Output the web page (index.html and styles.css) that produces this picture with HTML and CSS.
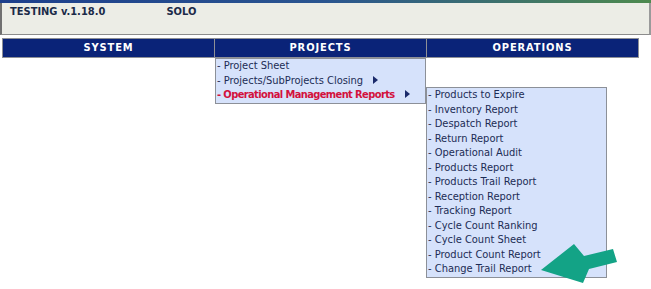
FILE: index.html
```html
<!DOCTYPE html>
<html lang="en">
<head>
<meta charset="UTF-8">
<title>Menu</title>
<link rel="stylesheet" href="styles.css">
</head>
<body>
<div class="topbar"></div>
<div class="header">
<span class="app-name">TESTING v.1.18.0</span>
<span class="app-user">SOLO</span>
</div>
<ul class="nav">
<li class="nav-item">SYSTEM</li>
<li class="nav-item">PROJECTS
<ul class="dropdown">
<li>- Project Sheet</li>
<li class="has-sub">- Projects/SubProjects Closing <span class="caret"></span></li>
<li class="has-sub active"><span class="label">- Operational Management Reports</span> <span class="caret"></span>
<ul class="submenu">
<li>- Products to Expire</li>
<li>- Inventory Report</li>
<li>- Despatch Report</li>
<li>- Return Report</li>
<li>- Operational Audit</li>
<li>- Products Report</li>
<li>- Products Trail Report</li>
<li>- Reception Report</li>
<li>- Tracking Report</li>
<li>- Cycle Count Ranking</li>
<li>- Cycle Count Sheet</li>
<li>- Product Count Report</li>
<li>- Change Trail Report</li>
</ul>
</li>
</ul>
</li>
<li class="nav-item">OPERATIONS</li>
</ul>
<svg class="pointer" width="90" height="50" viewBox="0 0 90 50">
<polygon points="1,27 34,1 44,13 73,6 77,19 49,26 43,40" fill="#13a386"/>
</svg>
</body>
</html>
```

FILE: styles.css
```css
body {
    margin: 0;
    background: #fff;
    font: 11px/14.5px "DejaVu Sans Condensed", Tahoma, sans-serif;
    color: #1c2c55;
    position: relative;
    height: 289px;
    overflow: hidden;
}

.topbar {
    height: 3px;
    background: linear-gradient(to right, #1d3f8c, #2a5590 50%, #4d8a4e);
}

.header {
    height: 32px;
    background: #ecede6;
    border-left: 2px solid #707070;
    border-right: 2px solid #9a9a9a;
    border-bottom: 1px solid #8c8c8c;
    padding: 2px 0 0 8px;
    box-sizing: border-box;
    font-weight: bold;
    color: #1b2a48;
}

.app-name {
    display: inline-block;
    width: 153px;
}

.nav {
    list-style: none;
    margin: 3px 0 0 2px;
    padding: 0;
    width: 637px;
    display: flex;
    border: 1px solid #8e9096;
    box-sizing: border-box;
    background: #8e9096;
    gap: 1px;
}

.nav-item {
    flex: 1;
    height: 18px;
    line-height: 18px;
    text-align: center;
    background: #0a2378;
    color: #fff;
    font-weight: bold;
    letter-spacing: 0.9px;
    position: relative;
}

.dropdown,
.submenu {
    list-style: none;
    margin: 0;
    padding: 0;
    position: absolute;
    background: #d6e2fb;
    border: 1px solid #8c9098;
    text-align: left;
    font-weight: normal;
    letter-spacing: 0;
    color: #1c2c55;
    line-height: 14.5px;
}

.dropdown {
    top: 19px;
    left: 0;
    width: 209px;
}

.dropdown li {
    padding-left: 1px;
    position: relative;
    white-space: nowrap;
}

.has-sub .caret {
    display: inline-block;
    width: 0;
    height: 0;
    border-top: 4px solid transparent;
    border-bottom: 4px solid transparent;
    border-left: 5px solid #1b2a6b;
    margin-left: 7px;
}

.active {
    color: #d3113d;
}

.active .label {
    font-weight: bold;
    letter-spacing: -0.6px;
}

.submenu {
    top: -1px;
    left: 210px;
    width: 179px;
}

.submenu li {
    color: #1c2c55;
}

.pointer {
    position: absolute;
    left: 540px;
    top: 243px;
}
```
